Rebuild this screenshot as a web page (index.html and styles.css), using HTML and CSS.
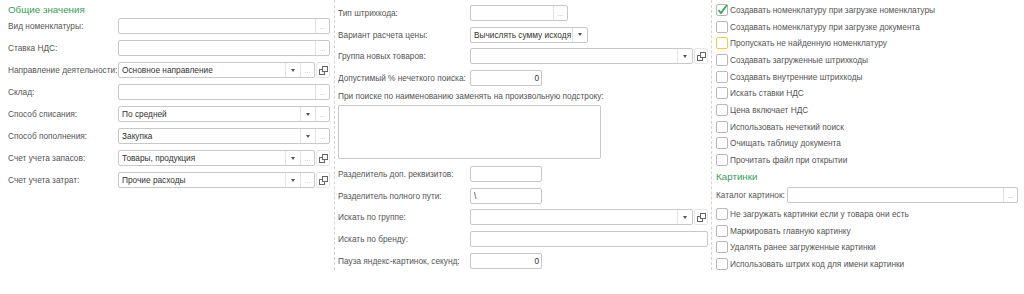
FILE: index.html
```html
<!DOCTYPE html>
<html lang="ru">
<head>
    <meta charset="UTF-8">
    <title>Настройки загрузки</title>
    <link rel="stylesheet" href="styles.css">
</head>
<body>
    <div class="form">
        <!-- Левая колонка -->
        <div class="col col-left">
            <div class="title">Общие значения</div>
            <div class="row first">
                <span class="lbl">Вид номенклатуры:</span>
                <div class="field"><span class="val"></span><span class="btn dots">...</span></div>
            </div>
            <div class="row">
                <span class="lbl">Ставка НДС:</span>
                <div class="field"><span class="val"></span><span class="btn dots">...</span></div>
            </div>
            <div class="row">
                <span class="lbl">Направление деятельности:</span>
                <div class="field"><span class="val">Основное направление</span><span class="btn"><i class="arrow"></i></span><span class="btn dots">...</span></div>
                <span class="open"><svg width="9" height="9" viewBox="0 0 9 9"><rect x="0.5" y="3.5" width="5" height="5" fill="#fff" stroke="#666"/><rect x="3.5" y="0.5" width="5" height="5" fill="#fff" stroke="#666"/></svg></span>
            </div>
            <div class="row">
                <span class="lbl">Склад:</span>
                <div class="field"><span class="val"></span><span class="btn dots">...</span></div>
            </div>
            <div class="row">
                <span class="lbl">Способ списания:</span>
                <div class="field"><span class="val">По средней</span><span class="btn"><i class="arrow"></i></span><span class="btn dots">...</span></div>
            </div>
            <div class="row">
                <span class="lbl">Способ пополнения:</span>
                <div class="field"><span class="val">Закупка</span><span class="btn"><i class="arrow"></i></span><span class="btn dots">...</span></div>
            </div>
            <div class="row">
                <span class="lbl">Счет учета запасов:</span>
                <div class="field"><span class="val">Товары, продукция</span><span class="btn"><i class="arrow"></i></span><span class="btn dots">...</span></div>
                <span class="open"><svg width="9" height="9" viewBox="0 0 9 9"><rect x="0.5" y="3.5" width="5" height="5" fill="#fff" stroke="#666"/><rect x="3.5" y="0.5" width="5" height="5" fill="#fff" stroke="#666"/></svg></span>
            </div>
            <div class="row">
                <span class="lbl">Счет учета затрат:</span>
                <div class="field"><span class="val">Прочие расходы</span><span class="btn"><i class="arrow"></i></span><span class="btn dots">...</span></div>
                <span class="open"><svg width="9" height="9" viewBox="0 0 9 9"><rect x="0.5" y="3.5" width="5" height="5" fill="#fff" stroke="#666"/><rect x="3.5" y="0.5" width="5" height="5" fill="#fff" stroke="#666"/></svg></span>
            </div>
        </div>

        <!-- Средняя колонка -->
        <div class="col col-mid">
            <div class="row first">
                <span class="lbl">Тип штрихкода:</span>
                <div class="field w98"><span class="val"></span><span class="btn dots">...</span></div>
            </div>
            <div class="row">
                <span class="lbl">Вариант расчета цены:</span>
                <div class="field w118"><span class="val">Вычислять сумму исходя</span><span class="btn"><i class="arrow"></i></span></div>
            </div>
            <div class="row">
                <span class="lbl">Группа новых товаров:</span>
                <div class="field"><span class="val"></span><span class="btn"><i class="arrow"></i></span></div>
                <span class="open"><svg width="9" height="9" viewBox="0 0 9 9"><rect x="0.5" y="3.5" width="5" height="5" fill="#fff" stroke="#666"/><rect x="3.5" y="0.5" width="5" height="5" fill="#fff" stroke="#666"/></svg></span>
            </div>
            <div class="row">
                <span class="lbl">Допустимый % нечеткого поиска:</span>
                <div class="field w72"><span class="val num">0</span></div>
            </div>
            <div class="caption">При поиске по наименованию заменять на произвольную подстроку:</div>
            <div class="memo"></div>
            <div class="row after-memo">
                <span class="lbl">Разделитель доп. реквизитов:</span>
                <div class="field w72"><span class="val"></span></div>
            </div>
            <div class="row">
                <span class="lbl">Разделитель полного пути:</span>
                <div class="field w72"><span class="val">\</span></div>
            </div>
            <div class="row">
                <span class="lbl">Искать по группе:</span>
                <div class="field"><span class="val"></span><span class="btn"><i class="arrow"></i></span></div>
                <span class="open"><svg width="9" height="9" viewBox="0 0 9 9"><rect x="0.5" y="3.5" width="5" height="5" fill="#fff" stroke="#666"/><rect x="3.5" y="0.5" width="5" height="5" fill="#fff" stroke="#666"/></svg></span>
            </div>
            <div class="row">
                <span class="lbl">Искать по бренду:</span>
                <div class="field"><span class="val"></span></div>
            </div>
            <div class="row">
                <span class="lbl">Пауза яндекс-картинок, секунд:</span>
                <div class="field w72"><span class="val num">0</span></div>
            </div>
        </div>

        <!-- Правая колонка -->
        <div class="col col-right">
            <div class="check"><span class="box checked"><svg class="tick" width="13" height="13" viewBox="0 0 13 13"><path d="M2.5 7 L5 10 L11 2" fill="none" stroke="#3aa655" stroke-width="1.8"/></svg></span>Создавать номенклатуру при загрузке номенклатуры</div>
            <div class="check"><span class="box"></span>Создавать номенклатуру при загрузке документа</div>
            <div class="check"><span class="box focus"></span>Пропускать не найденную номенклатуру</div>
            <div class="check"><span class="box"></span>Создавать загруженные штрихкоды</div>
            <div class="check"><span class="box"></span>Создавать внутренние штрихкоды</div>
            <div class="check"><span class="box"></span>Искать ставки НДС</div>
            <div class="check"><span class="box"></span>Цена включает НДС</div>
            <div class="check"><span class="box"></span>Использовать нечеткий поиск</div>
            <div class="check"><span class="box"></span>Очищать таблицу документа</div>
            <div class="check"><span class="box"></span>Прочитать файл при открытии</div>

            <div class="title">Картинки</div>
            <div class="row pic-row">
                <span class="lbl">Каталог картинок:</span>
                <div class="field"><span class="val"></span><span class="btn dots">...</span></div>
            </div>
            <div class="pic-checks">
                <div class="check"><span class="box"></span>Не загружать картинки если у товара они есть</div>
                <div class="check"><span class="box"></span>Маркировать главную картинку</div>
                <div class="check"><span class="box"></span>Удалять ранее загруженные картинки</div>
                <div class="check"><span class="box"></span>Использовать штрих код для имени картинки</div>
            </div>
        </div>
    </div>
</body>
</html>
```

FILE: styles.css
```css
body {
    margin: 0;
    background: #fff;
    font-family: "Liberation Sans", Arial, sans-serif;
    font-size: 8.3px;
    color: #555;
}
.form {
    display: flex;
    height: 270px;
}
.col {
    box-sizing: border-box;
}
.col-left {
    width: 334px;
    padding: 2px 4px 0 8px;
}
.col-mid {
    width: 377px;
    border-left: 1px dashed #d4d4d4;
    padding: 5px 3px 0 3px;
}
.col-right {
    flex: 1;
    border-left: 1px dashed #d4d4d4;
    padding: 1.6px 6px 0 4px;
}
.title {
    font-size: 9.8px;
    line-height: 16px;
    height: 16px;
    color: #3a9c58;
}
.row {
    display: flex;
    align-items: center;
    height: 16px;
    margin-top: 6px;
}
.row.first {
    margin-top: 0;
}
.col-mid .row {
    margin-top: 5.6px;
}
.col-mid .row.first {
    margin-top: 0;
}
.lbl {
    flex: none;
    width: 110px;
    white-space: nowrap;
    overflow: hidden;
}
.col-mid .lbl {
    width: 132px;
}
.field {
    flex: 1;
    min-width: 0;
    display: flex;
    height: 16px;
    box-sizing: border-box;
    border: 1px solid #c8c8c8;
    border-radius: 2px;
    background: #fff;
}
.field.w72 {
    flex: none;
    width: 72px;
}
.field.w98 {
    flex: none;
    width: 98px;
}
.field.w118 {
    flex: none;
    width: 118px;
}
.val {
    flex: 1;
    min-width: 0;
    padding: 0 2px 0 3px;
    line-height: 14px;
    color: #333;
    white-space: nowrap;
    overflow: hidden;
}
.val.num {
    text-align: right;
}
.btn {
    flex: none;
    width: 14px;
    border-left: 1px solid #e3e3e3;
    display: flex;
    align-items: center;
    justify-content: center;
}
.dots {
    color: #aaa;
    font-size: 7px;
    line-height: 14px;
    padding-top: 2px;
    box-sizing: border-box;
}
.arrow {
    width: 0;
    height: 0;
    border-left: 2px solid transparent;
    border-right: 2px solid transparent;
    border-top: 3px solid #555;
}
.open {
    flex: none;
    width: 14px;
    height: 16px;
    box-sizing: border-box;
    margin-left: 1px;
    border: 1px solid #e6e6e6;
    border-radius: 2px;
    display: flex;
    align-items: center;
    justify-content: center;
}
.caption {
    margin-top: 4.5px;
    line-height: 12px;
    white-space: nowrap;
}
.memo {
    margin-top: 3px;
    width: 263px;
    height: 54px;
    box-sizing: border-box;
    border: 1px solid #c8c8c8;
    border-radius: 2px;
}
.col-mid .row.after-memo {
    margin-top: 7px;
}
.check {
    display: flex;
    align-items: center;
    height: 16.7px;
    white-space: nowrap;
}
.box {
    position: relative;
    flex: none;
    width: 12px;
    height: 12px;
    box-sizing: border-box;
    margin-right: 2px;
    border: 1px solid #b8b8b8;
    border-radius: 2px;
    background: #fff;
}
.box.focus {
    border-color: #f0c94e;
}
.tick {
    position: absolute;
    left: -1px;
    top: -2px;
}
.col-right .title {
    margin-top: 0.5px;
}
.col-right .lbl {
    width: 71px;
}
.pic-row {
    margin-top: 2px;
}
.pic-checks {
    margin-top: 2.3px;
}
.pic-checks .check {
    height: 16.9px;
}
```
